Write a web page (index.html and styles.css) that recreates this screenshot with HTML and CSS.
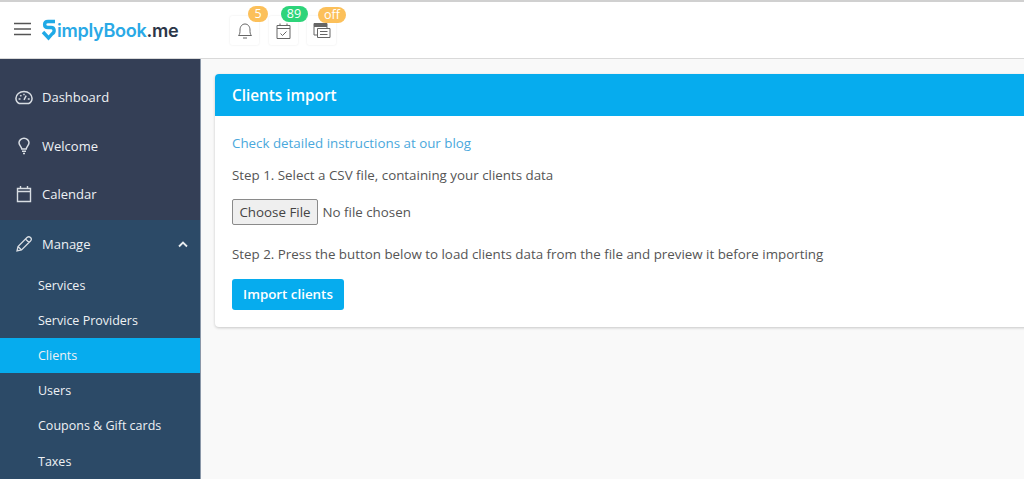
FILE: index.html
```html
<!DOCTYPE html>
<html>

<head>
    <meta charset="UTF-8">
    <title>Clients import</title>
    <link rel="stylesheet" href="styles.css">
</head>

<body>

    <header class="topbar">
        <svg class="burger" width="18" height="14" viewBox="0 0 18 14">
            <path d="M0 1.5h17M0 7h17M0 12.5h17" stroke="#555" stroke-width="1.5" fill="none" />
        </svg>
        <div class="logo">
            <svg class="logo-s" width="16" height="22" viewBox="0 0 16 22">
                <path d="M14 2.5H7C2.5 2.5 2.5 8.5 7 8.5H10C14 8.5 14 13.5 11 15L7.5 19L2 13" stroke="#1fa9e6" stroke-width="3.4" fill="none" />
            </svg>
            <span class="logo-blue">implyBook</span><span class="logo-dark">.me</span>
        </div>
        <div class="top-icons">
            <div class="top-icon">
                <span class="badge badge-yellow badge-bell">5</span>
                <svg width="16" height="18" viewBox="0 0 16 18">
                    <path d="M1.5 13.5C3 12 3 10.5 3 8C3 4.5 5 2 8 2S13 4.5 13 8C13 10.5 13 12 14.5 13.5ZM6 16H10" stroke="#666" fill="none" />
                </svg>
            </div>
            <div class="top-icon">
                <span class="badge badge-green">89</span>
                <svg width="15" height="18" viewBox="0 0 15 18">
                    <path d="M1 3.5H14V16.5H1ZM1 6.5H14M4 1.5V4M11 1.5V4M4.5 11.5L6.5 13.5L10.5 9.5" stroke="#666" fill="none" />
                </svg>
            </div>
            <div class="top-icon">
                <span class="badge badge-yellow badge-off">off</span>
                <svg width="18" height="17" viewBox="0 0 18 17">
                    <path d="M1 1.5H14V4.5H1Z" fill="#666" stroke="#666" />
                    <path d="M1 4.5V13H4.5M14 4.5V6.5M4.5 6.5H17V15.5H4.5ZM7 9.5H14.5M7 12.5H14.5" stroke="#666" fill="none" />
                </svg>
            </div>
        </div>
    </header>

    <div class="layout">
        <nav class="sidebar">
            <div class="main-menu">
                <a class="menu-item">
                    <svg class="menu-icon" width="19" height="15" viewBox="0 0 19 15">
                        <path d="M4.5 13.8C2.3 12.8 1 10.5 1 8.3C1 4.3 4.8 1.2 9.5 1.2S18 4.3 18 8.3C18 10.5 16.7 12.8 14.5 13.8Z" stroke="#d8dde3" stroke-width="1.6" fill="none" />
                        <path d="M9.5 10L11.8 5.5M3.8 9H5.8M13.5 9H15.5M5.5 5L6.8 6.3M9.5 3.5V5" stroke="#d8dde3" stroke-width="1.5" fill="none" />
                    </svg>
                    <span>Dashboard</span>
                </a>
                <a class="menu-item">
                    <svg class="menu-icon" width="18" height="18" viewBox="0 0 18 18">
                        <path d="M6.8 12C6.5 9.5 4 8.5 4 5.8C4 3.3 6.3 1.3 9 1.3S14 3.3 14 5.8C14 8.5 11.5 9.5 11.2 12ZM7 14.3H11M8 16.5H10" stroke="#d8dde3" stroke-width="1.5" fill="none" />
                    </svg>
                    <span>Welcome</span>
                </a>
                <a class="menu-item">
                    <svg class="menu-icon" width="18" height="18" viewBox="0 0 18 18">
                        <path d="M2.5 3.5H15.5V16.5H2.5ZM2.5 6.5H15.5M5.5 1V4M12.5 1V4" stroke="#d8dde3" stroke-width="1.4" fill="none" />
                    </svg>
                    <span>Calendar</span>
                </a>
            </div>
            <div class="sub-menu">
                <a class="menu-item manage-item">
                    <svg class="menu-icon" width="18" height="18" viewBox="0 0 18 18">
                        <path d="M2 16L3 11.5L12 2.5C13 1.5 14.5 1.5 15.5 2.5S16.5 5 15.5 6L6.5 15ZM3 11.5L6.5 15M10.5 4L14 7.5" stroke="#d8dde3" stroke-width="1.3" fill="none" />
                    </svg>
                    <span>Manage</span>
                    <svg class="chevron" width="10" height="7" viewBox="0 0 10 7">
                        <path d="M1 5.5L5 1.5L9 5.5" stroke="#e8ecef" stroke-width="1.8" fill="none" />
                    </svg>
                </a>
                <a class="sub-item">Services</a>
                <a class="sub-item">Service Providers</a>
                <a class="sub-item active">Clients</a>
                <a class="sub-item">Users</a>
                <a class="sub-item">Coupons &amp; Gift cards</a>
                <a class="sub-item">Taxes</a>
            </div>
        </nav>

        <main class="content">
            <section class="panel">
                <h2 class="panel-head">Clients import</h2>
                <div class="panel-body">
                    <a class="blog-link">Check detailed instructions at our blog</a>
                    <p class="step">Step 1. Select a CSV file, containing your clients data</p>
                    <div class="file-row">
                        <button class="file-btn">Choose File</button>
                        <span>No file chosen</span>
                    </div>
                    <p class="step">Step 2. Press the button below to load clients data from the file and preview it before importing</p>
                    <button class="import-btn">Import clients</button>
                </div>
            </section>
        </main>
    </div>

</body>

</html>
```

FILE: styles.css
```css
html,
body {
    margin: 0;
    height: 100%;
    overflow: hidden;
}

body {
    font-family: "Open Sans", "Liberation Sans", sans-serif;
    font-size: 13.35px;
    color: #555;
    background: #fff;
}

.topbar {
    height: 56px;
    display: flex;
    align-items: center;
    border-top: 2px solid #d0d0d0;
    border-bottom: 1px solid #d9d9d9;
    background: #fff;
}

.burger {
    margin-left: 14px;
    margin-top: -3px;
}

.logo {
    display: flex;
    align-items: center;
    margin-left: 9px;
    width: 189px;
    font-family: "Inter", "Noto Sans", sans-serif;
    font-size: 18.1px;
    font-weight: 600;
    letter-spacing: -0.3px;
}

.logo-blue {
    color: #2aa9e6;
}

.logo-dark {
    color: #2b3648;
}

.top-icons {
    display: flex;
    gap: 9.5px;
}

.top-icon {
    position: relative;
    width: 29px;
    height: 29px;
    margin-top: 1px;
    display: flex;
    align-items: center;
    justify-content: center;
    box-shadow: 0 0 2px #e4e4e4;
    border-radius: 2px;
}

.badge {
    position: absolute;
    top: -10px;
    height: 16px;
    line-height: 16px;
    text-align: center;
    border-radius: 8px;
    font-size: 12.5px;
    color: #fff;
}

.badge-yellow {
    background: #fcc05a;
}

.badge-green {
    background: #2ed47a;
    left: 12px;
    width: 27px;
}

.badge-bell {
    left: 18px;
    width: 20px;
}

.badge-off {
    left: 11px;
    width: 28px;
    top: -9px;
}

.layout {
    display: flex;
    height: 421px;
}

.sidebar {
    width: 200px;
    flex: none;
    background: #2c4a67;
    color: #eef1f4;
}

.main-menu {
    height: 161px;
    background: #343f56;
    padding-top: 14px;
    box-sizing: border-box;
}

.menu-item {
    height: 48.5px;
    display: flex;
    align-items: center;
    padding-left: 15px;
    font-size: 13px;
}

.menu-icon {
    width: 18px;
    margin-right: 9px;
}

.manage-item {
    height: 48px;
}

.chevron {
    margin-left: auto;
    margin-right: 12px;
}

.sub-item {
    height: 35.1px;
    display: flex;
    align-items: center;
    padding-left: 38px;
    font-size: 12.5px;
}

.sub-item.active {
    background: #06acee;
}

.content {
    flex: 1;
    min-width: 0;
    background: #f9f9f9;
    padding: 15px 0 0 14px;
    border-left: 1px solid #8a97a8;
}

.panel {
    margin-right: -10px;
    height: 253px;
    background: #fff;
    border-radius: 4px;
    box-shadow: 0 1px 3px rgba(0, 0, 0, 0.2);
}

.panel-head {
    margin: 0;
    height: 42px;
    line-height: 42px;
    padding-left: 17px;
    font-size: 15.3px;
    font-weight: 600;
    color: #fff;
    background: #06acee;
    border-radius: 4px 4px 0 0;
}

.panel-body {
    padding: 18px 17px 0;
}

.blog-link {
    display: block;
    color: #4aa8dc;
    line-height: 18px;
}

.step {
    margin: 14px 0 0;
    line-height: 18px;
}

.file-row {
    display: flex;
    align-items: center;
    gap: 4.5px;
    margin-top: 15px;
}

.file-btn {
    width: 86px;
    height: 26px;
    padding: 0;
    font-family: inherit;
    font-size: 13.35px;
    color: #444;
    background: #efefef;
    border: 1px solid #8a8a8a;
    border-radius: 2px;
}

.file-row + .step {
    margin-top: 20px;
}

.import-btn {
    display: block;
    margin-top: 16px;
    width: 112px;
    height: 31px;
    padding: 0 0 2px;
    font-family: inherit;
    font-size: 13.35px;
    font-weight: 600;
    color: #fff;
    background: #06acee;
    border: 0;
    border-radius: 3px;
}
```
